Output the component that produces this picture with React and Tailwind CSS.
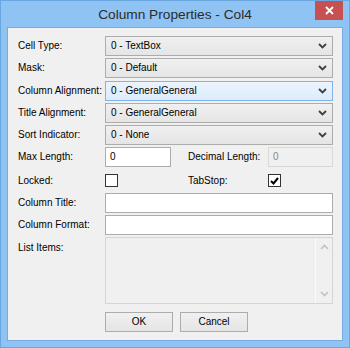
import React from "react";

const font = { fontFamily: '"Liberation Sans", Arial, sans-serif' };

function Chevron({ color = "#404040" }) {
  return (
    <svg width="9" height="6" viewBox="0 0 9 6" className="shrink-0">
      <path d="M1 1 L4.5 4.5 L8 1" fill="none" stroke={color} strokeWidth="1.8" />
    </svg>
  );
}

function Combo({ value, focused }) {
  return (
    <div
      className={
        "flex h-[20px] flex-1 items-center justify-between border pl-[5px] pr-[5px] " +
        (focused
          ? "border-[#7eb4ea] bg-gradient-to-b from-[#ecf4fc] to-[#dcecfc]"
          : "border-[#acacac] bg-gradient-to-b from-[#f0f0f0] to-[#e5e5e5]")
      }
    >
      <span className="whitespace-nowrap text-[10px] leading-none text-black">{value}</span>
      <Chevron />
    </div>
  );
}

function Label({ children }) {
  return (
    <div className="w-[87px] shrink-0 whitespace-nowrap text-[10px] leading-none text-black">{children}</div>
  );
}

function Check({ checked }) {
  return (
    <div className="flex h-[13px] w-[13px] shrink-0 items-center justify-center border border-[#333333] bg-white">
      {checked && (
        <svg width="9" height="8" viewBox="0 0 9 8">
          <path d="M1 4 L3.5 6.5 L8 1" fill="none" stroke="#000" strokeWidth="2" />
        </svg>
      )}
    </div>
  );
}

function Button({ children }) {
  return (
    <div className="flex h-[20px] w-[68px] items-center justify-center border border-[#acacac] bg-gradient-to-b from-[#f0f0f0] to-[#e5e5e5] text-[10px] leading-none text-black">
      {children}
    </div>
  );
}

export default function App() {
  return (
    <div
      style={font}
      className="relative flex h-[348px] w-[350px] flex-col border border-[#6aa6e0] bg-[#8ec3f3] px-[6px] pb-[6px] pt-[26px]"
    >
      <div className="absolute left-0 right-0 top-0 flex h-[28px] items-center justify-center">
        <span className="whitespace-nowrap text-[13.7px] leading-none text-[#2b2b2b]">Column Properties - Col4</span>
      </div>
      <div className="absolute right-[6px] top-0 flex h-[19px] w-[28px] items-center justify-center bg-[#c75050]">
        <svg width="9" height="9" viewBox="0 0 9 9">
          <path d="M1 1 L8 8 M8 1 L1 8" stroke="#fff" strokeWidth="1.8" />
        </svg>
      </div>

      <div className="flex flex-1 flex-col border border-[#78abe0] bg-[#f0f0f0] pl-[10px] pr-[9px] pt-[8px]">
        <div className="flex items-center">
          <Label>Cell Type:</Label>
          <Combo value="0 - TextBox" />
        </div>
        <div className="mt-[2px] flex items-center">
          <Label>Mask:</Label>
          <Combo value="0 - Default" />
        </div>
        <div className="mt-[3px] flex items-center">
          <Label>Column Alignment:</Label>
          <Combo value="0 - GeneralGeneral" focused />
        </div>
        <div className="mt-[2px] flex items-center">
          <Label>Title Alignment:</Label>
          <Combo value="0 - GeneralGeneral" />
        </div>
        <div className="mt-[2px] flex items-center">
          <Label>Sort Indicator:</Label>
          <Combo value="0 - None" />
        </div>

        <div className="mt-[2px] flex items-center">
          <Label>Max Length:</Label>
          <div className="flex h-[20px] w-[66px] shrink-0 items-center border border-[#acacac] bg-white pl-[4px] text-[10px] leading-none text-black">
            0
          </div>
          <div className="ml-[17px] w-[80px] shrink-0 whitespace-nowrap text-[10px] leading-none text-black">
            Decimal Length:
          </div>
          <div className="flex h-[20px] flex-1 items-center border border-[#d9d9d9] bg-[#f0f0f0] pl-[4px] text-[10px] leading-none text-[#8a8a8a]">
            0
          </div>
        </div>

        <div className="mt-[3px] flex h-[21px] items-center">
          <Label>Locked:</Label>
          <Check />
          <div className="ml-[70px] w-[80px] shrink-0 whitespace-nowrap text-[10px] leading-none text-black">TabStop:</div>
          <Check checked />
        </div>

        <div className="mt-[2px] flex items-center">
          <Label>Column Title:</Label>
          <div className="h-[20px] flex-1 border border-[#acacac] bg-white" />
        </div>
        <div className="mt-[2px] flex items-center">
          <Label>Column Format:</Label>
          <div className="h-[20px] flex-1 border border-[#acacac] bg-white" />
        </div>

        <div className="mt-[2px] flex items-start">
          <div className="pt-[6px]">
            <Label>List Items:</Label>
          </div>
          <div className="flex h-[67px] flex-1 border border-[#d5d5d5] bg-[#f0f0f0]">
            <div className="flex-1" />
            <div className="flex w-[17px] flex-col items-center justify-between border-l border-[#fafafa] py-[6px]">
              <svg width="9" height="6" viewBox="0 0 9 6">
                <path d="M1 5 L4.5 1.5 L8 5" fill="none" stroke="#c2c2c2" strokeWidth="1.6" />
              </svg>
              <svg width="9" height="6" viewBox="0 0 9 6">
                <path d="M1 1 L4.5 4.5 L8 1" fill="none" stroke="#c2c2c2" strokeWidth="1.6" />
              </svg>
            </div>
          </div>
        </div>

        <div className="mt-[8px] flex gap-[7px] pl-[87px]">
          <Button>OK</Button>
          <Button>Cancel</Button>
        </div>
      </div>
    </div>
  );
}
